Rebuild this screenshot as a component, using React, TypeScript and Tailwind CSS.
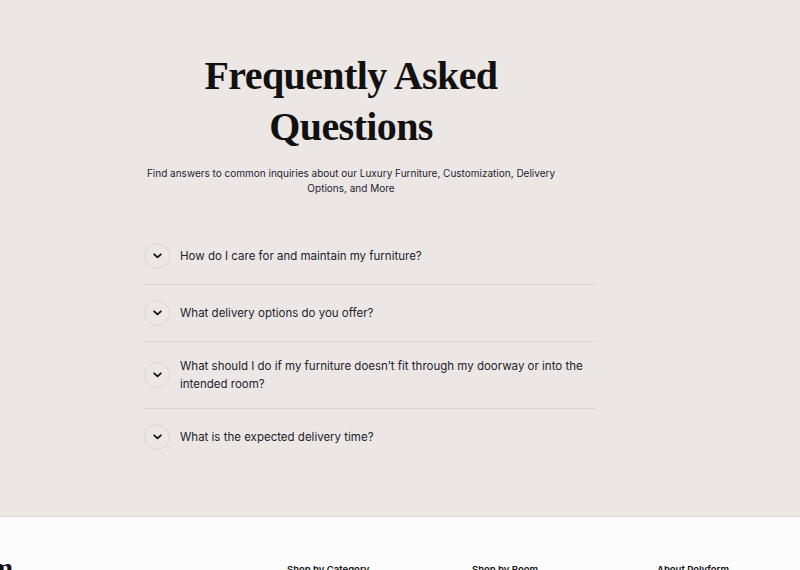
import React from "react";

const faqs = [
  "How do I care for and maintain my furniture?",
  "What delivery options do you offer?",
  "What should I do if my furniture doesn’t fit through my doorway or into the intended room?",
  "What is the expected delivery time?",
];

function Chevron() {
  return (
    <svg width="9" height="6" viewBox="0 0 9 6" fill="none">
      <path d="M1.2 1.3l3.3 3l3.3-3" stroke="#111" strokeWidth="1.8" strokeLinecap="round" strokeLinejoin="round" />
    </svg>
  );
}

export default function App() {
  return (
    <div className="w-[800px] h-[570px] overflow-hidden font-['Inter',sans-serif]">
      <section className="bg-[#ece7e4] h-[517px] border-b border-[#dcd7d3] pt-[50px]">
        <div className="ml-[144px] w-[452px] flex flex-col">
          <div className="w-[414px] flex flex-col items-center text-center">
            <h1 className="font-['Liberation_Serif',serif] font-bold text-[40px] leading-[51px] tracking-[-0.6px] text-[#111] w-[330px]">
              Frequently Asked Questions
            </h1>
            <p className="mt-[14px] text-[10px] leading-[15px] text-[#1c2336] w-[420px]">
              Find answers to common inquiries about our Luxury Furniture, Customization, Delivery Options, and More
            </p>
          </div>
          <div className="mt-[32px] flex flex-col">
            {faqs.map((q, i) => (
              <div
                key={i}
                className={`flex items-center gap-[10px] py-[15px] ${i < faqs.length - 1 ? "border-b border-[#dbd6d3]" : ""}`}
              >
                <div className="w-[26px] h-[26px] shrink-0 rounded-full border border-[#dcd7d4] flex items-center justify-center">
                  <Chevron />
                </div>
                <span className="text-[11.5px] leading-[18px] text-[#22222e] pr-[6px]">{q}</span>
              </div>
            ))}
          </div>
        </div>
      </section>
      <footer className="bg-[#fdfcfd] h-[60px] pt-[36px] flex">
        <div className="w-[287px] shrink-0 overflow-hidden flex justify-end">
          <span className="font-['Liberation_Serif',serif] font-bold text-[28px] leading-[30px] text-[#111] mr-[274px] whitespace-nowrap">
            Polyform
          </span>
        </div>
        <div className="w-[185px] shrink-0 text-[9.5px] font-semibold text-[#111] pt-[10px]">Shop by Category</div>
        <div className="w-[185px] shrink-0 text-[9.5px] font-semibold text-[#111] pt-[10px]">Shop by Room</div>
        <div className="w-[143px] shrink-0 text-[9.5px] font-semibold text-[#111] pt-[10px]">About Polyform</div>
      </footer>
    </div>
  );
}
